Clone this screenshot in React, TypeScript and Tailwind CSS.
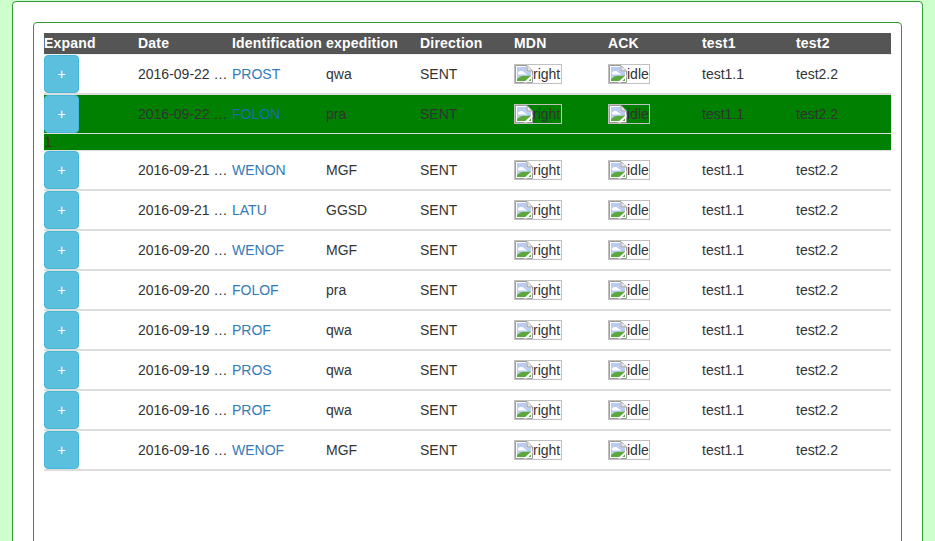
const rows = [
  { date: '2016-09-22', id: 'PROST', exp: 'qwa' },
  { date: '2016-09-22', id: 'FOLON', exp: 'pra', open: true },
  { date: '2016-09-21', id: 'WENON', exp: 'MGF' },
  { date: '2016-09-21', id: 'LATU', exp: 'GGSD' },
  { date: '2016-09-20', id: 'WENOF', exp: 'MGF' },
  { date: '2016-09-20', id: 'FOLOF', exp: 'pra' },
  { date: '2016-09-19', id: 'PROF', exp: 'qwa' },
  { date: '2016-09-19', id: 'PROS', exp: 'qwa' },
  { date: '2016-09-16', id: 'PROF', exp: 'qwa' },
  { date: '2016-09-16', id: 'WENOF', exp: 'MGF' },
];

const headers = ['Expand', 'Date', 'Identification', 'expedition', 'Direction', 'MDN', 'ACK', 'test1', 'test2'];

const BrokenIcon = () => (
  <svg width="18" height="18" viewBox="0 0 18 18" className="shrink-0">
    <path d="M0.5 0.5H12L17.5 6V17.5H0.5Z" fill="#fff" stroke="#9a9a9a" />
    <path d="M2 2H11.5V6.5H16V10.5L9.5 16H2Z" fill="#b9cdf2" />
    <path d="M3 8C4 5.5 8 5.5 9 7.5C10 8 11.5 8 11.5 9.5H3Z" fill="#fff" />
    <path d="M2 16V14C5 11 8 10 11 11L16 10.5V16Z" fill="#5aa93a" />
    <path d="M8.5 17.5L17.5 9.5V12L12 17.5Z" fill="#fff" />
    <path d="M12 1V6H17" fill="#e8e8e8" stroke="#9a9a9a" />
  </svg>
);

const Broken = ({ alt, width }: { alt: string; width: string }) => (
  <span className={`flex h-5 items-center border border-[#c0c0c0] ${width}`}>
    <BrokenIcon />
    <span>{alt}</span>
  </span>
);

const Row = ({ date, id, exp, open }: { date: string; id: string; exp: string; open?: boolean }) => (
  <>
    <div className={`grid h-[38px] grid-cols-[94px_94px_94px_94px_94px_94px_94px_94px_95px] items-center ${open ? 'bg-[#008000]' : ''}`}>
      <div>
        <button className="flex h-[38px] w-[35px] items-center justify-center rounded-[4px] border border-[#46b8da] bg-[#5bc0de] text-white">+</button>
      </div>
      <div className="whitespace-nowrap">{date} …</div>
      <div className={open ? 'text-[#1a6fb0]' : 'text-[#337ab7]'}>{id}</div>
      <div>{exp}</div>
      <div>SENT</div>
      <div><Broken alt="right" width="w-[48px]" /></div>
      <div><Broken alt="idle" width="w-[42px]" /></div>
      <div>test1.1</div>
      <div>test2.2</div>
    </div>
    {open ? (
      <div className="h-[18px] border-y border-[#dddddd] bg-[#008000] leading-[16px]">1</div>
    ) : (
      <div className="h-[2px] bg-[#dddddd]" />
    )}
  </>
);

export default function App() {
  return (
    <div className="h-[541px] overflow-hidden bg-[#ccffcc] px-3 pt-px font-['Liberation_Sans',Arial,sans-serif] text-[14px] leading-5 text-[#333333]">
      <div className="h-[600px] rounded-[4px] border border-[#339933] bg-white p-5">
        <div className="h-[560px] rounded-[4px] border border-[#339933] bg-white p-[10px]">
          <div className="grid h-[21px] grid-cols-[94px_94px_94px_94px_94px_94px_94px_94px_95px] items-center bg-[#555555] pb-[2px] font-bold tracking-[0.2px] text-white">
            {headers.map((h) => (
              <div key={h} className="whitespace-nowrap">{h}</div>
            ))}
          </div>
          <div className="h-px bg-[#eeeeee]" />
          {rows.map((r, i) => (
            <Row key={i} {...r} />
          ))}
        </div>
      </div>
    </div>
  );
}
